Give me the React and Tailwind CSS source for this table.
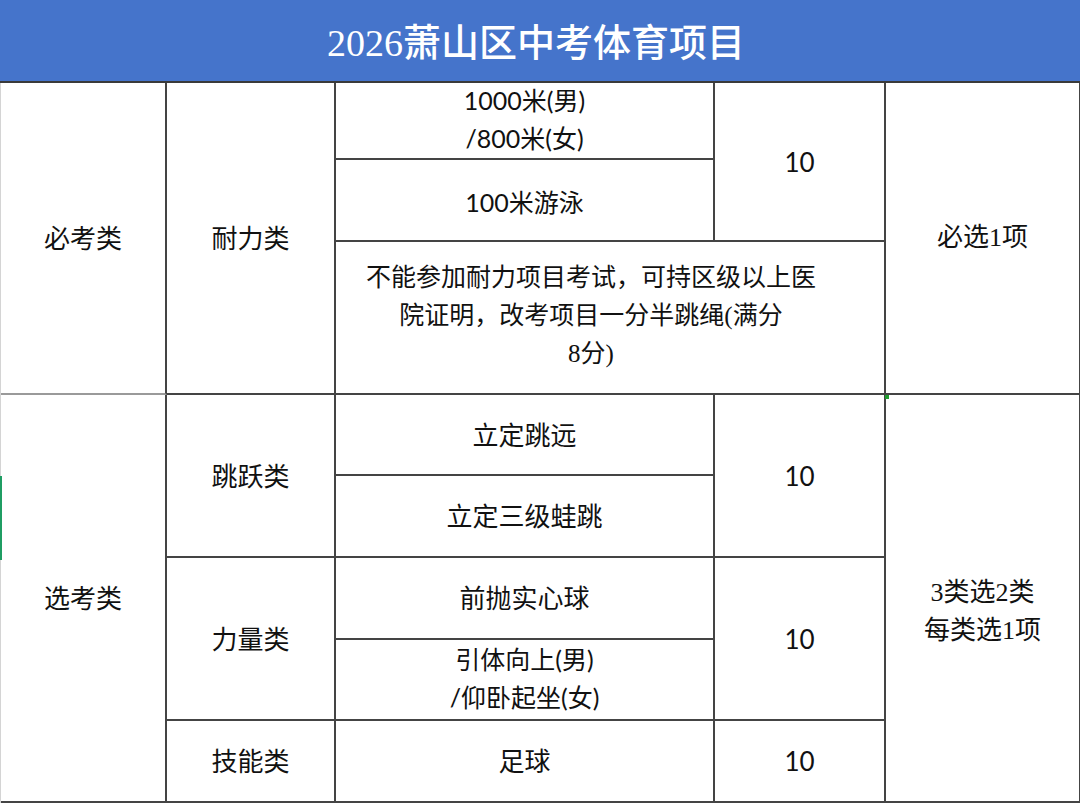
import React from 'react';

const serif = '"Liberation Serif", "Noto Sans CJK SC", serif';
const sans = 'Lato, "Noto Sans CJK SC", sans-serif';

const Cell = ({ className = '', children, font = sans, size = 'text-[26px]' }) => (
  <div
    className={`flex items-center justify-center text-center border-r-2 border-b-2 border-[#444] text-[#111] leading-[38px] ${size} ${className}`}
    style={{ fontFamily: font }}
  >
    <div>{children}</div>
  </div>
);

const App = () => {
  return (
    <div className="w-[1080px] h-[803px] bg-white overflow-hidden relative">
      {/* header */}
      <div className="h-[83px] bg-[#4574cb] border-b-2 border-[#3a3a3a] flex items-center justify-center">
        <span
          className="text-white text-[38px] leading-none pt-1 pr-2 font-medium"
          style={{ fontFamily: serif }}
        >
          2026萧山区中考体育项目
        </span>
      </div>

      <div className="grid grid-cols-[166px_169px_379px_171px_195px] grid-rows-[77px_82px_153px_81px_82px_82px_81px_82px] h-[720px] border-l border-[#d4d4d4]">
        {/* 必考类 */}
        <Cell className="row-span-3 border-b-[#9a9a9a]">必考类</Cell>
        <Cell className="row-span-3">耐力类</Cell>
        <Cell className="pb-1" size="text-[25px]">
          1000米(男)
          <br />
          /800米(女)
        </Cell>
        <Cell className="row-span-2">10</Cell>
        <Cell className="row-span-3" font={serif}>必选1项</Cell>
        <Cell className="pt-1" size="text-[25px]">100米游泳</Cell>
        <Cell className="col-span-2 pb-1 pr-[38px]" size="text-[25px]" font={serif}>
          不能参加耐力项目考试，可持区级以上医
          <br />
          院证明，改考项目一分半跳绳(满分
          <br />
          8分)
        </Cell>

        {/* 选考类 */}
        <Cell className="row-span-5">选考类</Cell>
        <Cell className="row-span-2">跳跃类</Cell>
        <Cell>立定跳远</Cell>
        <Cell className="row-span-2">10</Cell>
        <Cell className="row-span-5 pt-7" font={serif}>
          3类选2类
          <br />
          每类选1项
        </Cell>
        <Cell>立定三级蛙跳</Cell>
        <Cell className="row-span-2">力量类</Cell>
        <Cell>前抛实心球</Cell>
        <Cell className="row-span-2">10</Cell>
        <Cell className="pb-1" size="text-[25px]">
          引体向上(男)
          <br />
          /仰卧起坐(女)
        </Cell>
        <Cell>技能类</Cell>
        <Cell>足球</Cell>
        <Cell>10</Cell>
      </div>

      {/* stray marks in the screenshot */}
      <div className="absolute left-0 top-[476px] w-[2px] h-[84px] bg-[#1f9d63]" />
      <div className="absolute left-[885px] top-[395px] w-[4px] h-[4px] bg-[#1f9d2f]" />
    </div>
  );
};

export default App;
